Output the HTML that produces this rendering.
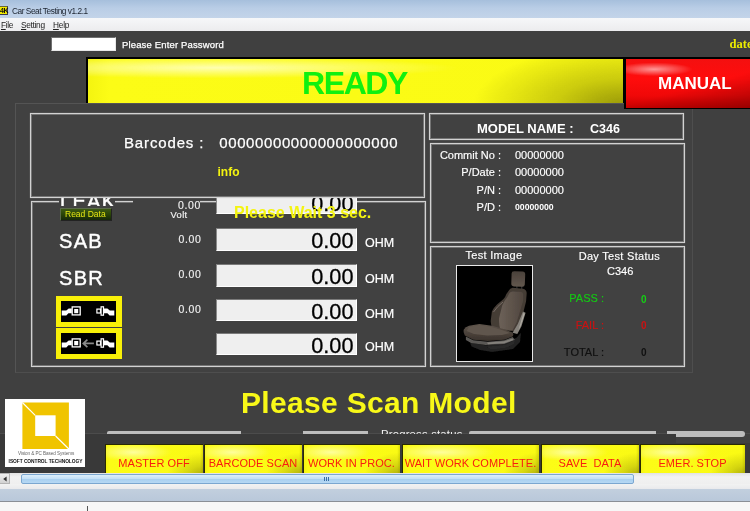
<!DOCTYPE html>
<html>
<head>
<meta charset="utf-8">
<title>Car Seat Testing</title>
<style>
*{box-sizing:border-box;margin:0;padding:0}
html,body{width:750px;height:511px;overflow:hidden;background:#404040;font-family:"Liberation Sans",sans-serif;}
#root{will-change:transform;position:relative;width:750px;height:511px;overflow:hidden;background:#404040}
.abs{position:absolute}
.t{position:absolute;white-space:nowrap;line-height:1}
/* title + menu */
#titlebar{left:0;top:0;width:750px;height:18px;background:linear-gradient(#a6bfdc 0%,#b9cde6 45%,#c3d4e9 100%)}
#menubar{left:0;top:18px;width:750px;height:13px;background:linear-gradient(#f6f7f9,#ececee)}
/* banner */
#banner{left:86px;top:57px;width:538px;height:46px;background:#000}
#banner .in{left:1.7px;top:1.7px;right:1.2px;bottom:0;background:
 radial-gradient(ellipse 45% 24% at 24% 20%,rgba(255,255,215,.8),rgba(255,255,120,0) 100%),
 radial-gradient(ellipse 150px 62px at 100% 108%,rgba(90,90,0,.62) 0%,rgba(105,105,0,.32) 45%,rgba(120,120,0,0) 100%),
 linear-gradient(90deg,#f4f410 0%,#fcfc16 4%,#fafa14 100%)}
#manual{left:624px;top:57px;width:130px;height:52.4px;background:#000}
#manual .in{left:2px;top:1.8px;right:0;bottom:1.5px;background:
 radial-gradient(ellipse 30% 14% at 22% 21%,rgba(255,175,175,.85),rgba(255,60,60,0) 100%),
 linear-gradient(165deg,rgba(120,0,0,0) 55%,rgba(110,0,0,.55) 100%),
 linear-gradient(180deg,#f41010 0%,#ff0c0c 40%,#f00808 75%,#c80000 100%)}
/* group boxes */
.gb{position:absolute;border:1px solid #d2d2d2;box-shadow:0 0 1px 0 rgba(200,200,200,.6), inset 0 0 0 1px rgba(190,190,190,.42)}
.inp{position:absolute;background:#efefef;border-top:1px solid #7a7a7a;border-left:1px solid #8a8a8a;border-bottom:1px solid #fff;border-right:1px solid #fff;overflow:hidden}
.inp span{position:absolute;right:2.5px;top:1px;font-size:21.7px;line-height:21px;color:#000;-webkit-text-stroke:.3px #000}
.ohm{font-size:12.5px;color:#fff;-webkit-text-stroke:.2px #fff}
.sv{font-size:10.5px;color:#f2f2f2;letter-spacing:.6px;-webkit-text-stroke:.15px #eee}
.big{font-size:20px;color:#fff;letter-spacing:1.3px;-webkit-text-stroke:.45px #fff}
.lab{font-size:11px;color:#fff;-webkit-text-stroke:.15px currentColor}
.btn{position:absolute;top:444px;height:30px;background:#2a2a00;}
.btn .in{position:absolute;left:1px;top:1px;right:0;bottom:0;background:
 radial-gradient(ellipse 40% 30% at 28% 25%,rgba(255,255,190,.8),rgba(255,255,120,0) 100%),
 radial-gradient(ellipse 36px 24px at 100% 108%,rgba(90,90,0,.5) 0%,rgba(105,105,0,.25) 45%,rgba(120,120,0,0) 100%),
 linear-gradient(90deg,#f4f410 0%,#fcfc16 4%,#fafa14 97%,#dcdc08 100%)}
.btn span{position:absolute;left:0;right:0;top:13.4px;text-align:center;font-size:11px;line-height:12px;color:#f81c10;letter-spacing:.05px;white-space:nowrap}
</style>
</head>
<body>
<div id="root">
  <!-- title bar -->
  <div id="titlebar" class="abs"></div>
  <div class="abs" style="left:0;top:6px;width:7.6px;height:9.4px;background:#f4ec00;border:1px solid #3a3a50;border-left:none;border-top-color:#6a6a30"></div>
  <div class="t" style="left:0;top:7px;font-size:7px;font-weight:bold;color:#111;letter-spacing:-.5px">4K</div>
  <div class="t" style="left:12px;top:7px;font-size:8.3px;color:#1c2430;letter-spacing:-.45px">Car Seat Testing v1.2.1</div>
  <div id="menubar" class="abs"></div>
  <div class="t" style="left:1px;top:20.6px;font-size:8.3px;color:#222;letter-spacing:-.35px"><u>F</u>ile</div>
  <div class="t" style="left:21px;top:20.6px;font-size:8.3px;color:#222;letter-spacing:-.3px"><u>S</u>etting</div>
  <div class="t" style="left:53px;top:20.6px;font-size:8.3px;color:#222;letter-spacing:-.2px"><u>H</u>elp</div>

  <!-- password -->
  <div class="abs" style="left:51px;top:37px;width:65px;height:14px;background:#fff;border:1px solid #707070;border-right-color:#e8e8e8;border-bottom-color:#e8e8e8"></div>
  <div class="t" style="left:122px;top:40px;font-size:9.5px;color:#fff;letter-spacing:.15px;-webkit-text-stroke:.25px #fff">Please Enter Password</div>
  <div class="t" style="left:729.4px;top:37.7px;font-size:12.6px;font-weight:bold;color:#ecec00;font-family:'Liberation Serif',serif">date</div>

  <!-- outer panel -->
  <div class="abs" style="left:15px;top:103px;width:677.5px;height:270.3px;background:#414141;border:1px solid #545454;border-right-color:#4e4e4e;border-bottom-color:#4e4e4e"></div>

  <!-- measurement groupbox (behind barcode box) -->
  <div class="gb" style="left:31px;top:201px;width:395px;height:166px"></div>
  <!-- LEAK caption (top clipped by barcode panel) -->
  <div class="abs" style="left:59px;top:190px;width:56px;height:16px;background:#414141;overflow:hidden"><div class="t big" style="left:1px;top:.6px">LEAK</div></div>
  <!-- small label w/ opaque background covering border -->
  <div class="abs" style="left:133px;top:198px;width:67px;height:22px;background:#414141"></div>
  <div class="t sv" style="left:178px;top:199.5px">0.00</div>
  <div class="t sv" style="left:170.5px;top:210.6px;font-size:9.3px;letter-spacing:.4px;-webkit-text-stroke:.2px #eee">Volt</div>
  <!-- row 1 input -->
  <div class="inp" style="left:216px;top:190.5px;width:141px;height:23px"><span>0.00</span></div>

  <!-- Read data button -->
  <div class="abs" style="left:60px;top:208px;width:52px;height:13px;background:linear-gradient(#3c5a12 0%,#2a4408 50%,#16280a 100%);border:1px solid #5a6a4a;border-bottom-color:#222;border-right-color:#222"></div>
  <div class="t" style="left:65px;top:210px;font-size:8.5px;color:#e6e614">Read Data</div>

  <!-- row labels -->
  <div class="t big" style="left:59px;top:231px">SAB</div>
  <div class="t big" style="left:59px;top:268px">SBR</div>
  <div class="t sv" style="left:178.5px;top:234px">0.00</div>
  <div class="t sv" style="left:178.5px;top:268.5px">0.00</div>
  <div class="t sv" style="left:178.5px;top:303.6px">0.00</div>

  <!-- inputs -->
  <div class="inp" style="left:216px;top:228px;width:141px;height:23px"><span>0.00</span></div>
  <div class="inp" style="left:216px;top:264px;width:141px;height:23px"><span>0.00</span></div>
  <div class="inp" style="left:216px;top:299px;width:141px;height:22px"><span>0.00</span></div>
  <div class="inp" style="left:216px;top:333px;width:141px;height:22px"><span>0.00</span></div>
  <div class="t ohm" style="left:365px;top:237px">OHM</div>
  <div class="t ohm" style="left:365px;top:273px">OHM</div>
  <div class="t ohm" style="left:365px;top:308px">OHM</div>
  <div class="t ohm" style="left:365px;top:341px">OHM</div>

  <!-- seat belt icons -->
  <div class="abs" style="left:56px;top:296px;width:66px;height:31px;background:#f8f008"></div>
  <div class="abs" style="left:61px;top:301px;width:55px;height:21px;background:#000"></div>
  <svg class="abs" style="left:61px;top:301px" width="56" height="21" viewBox="0 0 56 21">
    <path d="M0.7 9.4 L5.3 9.4 L7.7 7.6 L10.8 7.6 L10.8 12.3 L7.4 12.3 L5.3 14.5 L0.7 14.5 Z" fill="#fff"/>
    <rect x="11.2" y="5.9" width="8" height="8" fill="none" stroke="#fff" stroke-width="1.3"/>
    <rect x="13.2" y="8" width="4" height="4.2" fill="#fff"/>
    <rect x="35.9" y="8.1" width="3.6" height="3.9" fill="none" stroke="#fff" stroke-width="1.2"/>
    <rect x="40.1" y="5.8" width="2.4" height="8.4" fill="#000" stroke="#fff" stroke-width="1.2"/>
    <path d="M42.9 7.6 L46.4 7.6 L48.8 9.4 L53.3 9.4 L53.3 14.5 L48.6 14.5 L46.4 12.3 L42.9 12.3 Z" fill="#fff"/>
  </svg>
  <div class="abs" style="left:56px;top:328px;width:66px;height:31.4px;background:#f8f008"></div>
  <div class="abs" style="left:61px;top:333px;width:55px;height:21px;background:#000"></div>
  <svg class="abs" style="left:61px;top:333px" width="56" height="22" viewBox="0 0 56 22">
    <path d="M0.7 9.4 L5.3 9.4 L7.7 7.6 L10.8 7.6 L10.8 12.3 L7.4 12.3 L5.3 14.5 L0.7 14.5 Z" fill="#fff"/>
    <rect x="11.2" y="5.9" width="8" height="8" fill="none" stroke="#fff" stroke-width="1.3"/>
    <rect x="13.2" y="8" width="4" height="4.2" fill="#fff"/>
    <path d="M26.4 6.6 L22.3 10.4 L26.4 14.2 M22.6 10.4 L32.9 10.4" fill="none" stroke="#8a8a8a" stroke-width="1.7" stroke-linejoin="miter"/>
    <rect x="35.9" y="8.1" width="3.6" height="3.9" fill="none" stroke="#fff" stroke-width="1.2"/>
    <rect x="40.1" y="5.8" width="2.4" height="8.4" fill="#000" stroke="#fff" stroke-width="1.2"/>
    <path d="M42.9 7.6 L46.4 7.6 L48.8 9.4 L53.3 9.4 L53.3 14.5 L48.6 14.5 L46.4 12.3 L42.9 12.3 Z" fill="#fff"/>
  </svg>

  <!-- barcode groupbox (opaque; covers top of LEAK row) -->
  <div class="gb" style="left:30px;top:113px;width:395px;height:85px;background:#414141"></div>
  <div class="t" style="left:124px;top:134.5px;font-size:15px;color:#fff;letter-spacing:.85px;-webkit-text-stroke:.25px #fff">Barcodes :</div>
  <div class="t" style="left:219.3px;top:135px;font-size:15px;color:#fff;letter-spacing:.6px;-webkit-text-stroke:.25px #fff">00000000000000000000</div>
  <div class="t" style="left:217.5px;top:166px;font-size:12px;font-weight:bold;color:#f4f410">info</div>

  <!-- please wait overlay -->
  <div class="t" style="left:234px;top:205px;font-size:16px;font-weight:bold;color:#f4f410">Please Wait 3 sec.</div>

  <!-- model name box -->
  <div class="gb" style="left:429px;top:113px;width:255px;height:27px"></div>
  <div class="t" style="left:477px;top:122px;font-size:13px;font-weight:bold;color:#fff">MODEL NAME :</div>
  <div class="t" style="left:590px;top:122.6px;font-size:12.5px;font-weight:bold;color:#fff">C346</div>

  <!-- info box -->
  <div class="gb" style="left:430px;top:143px;width:255px;height:100px"></div>
  <div class="t lab" style="right:249px;top:150px">Commit No :</div>
  <div class="t lab" style="right:249px;top:167px">P/Date :</div>
  <div class="t lab" style="right:249px;top:185px">P/N :</div>
  <div class="t lab" style="right:249px;top:202px">P/D :</div>
  <div class="t lab" style="left:515px;top:150px">00000000</div>
  <div class="t lab" style="left:515px;top:167px">00000000</div>
  <div class="t lab" style="left:515px;top:185px">00000000</div>
  <div class="t" style="left:515px;top:203px;font-size:8.7px;font-weight:bold;color:#fff">00000000</div>

  <!-- test image / status box -->
  <div class="gb" style="left:430px;top:246px;width:255px;height:121px"></div>
  <div class="t lab" style="left:465.5px;top:250px;letter-spacing:.3px">Test Image</div>
  <div class="t lab" style="left:578.7px;top:251px;letter-spacing:.3px">Day Test Status</div>
  <div class="t lab" style="left:607px;top:266px">C346</div>
  <div class="t lab" style="right:146px;top:293px;color:#14c814">PASS :</div>
  <div class="t lab" style="right:146px;top:320px;color:#cc1212">FAIL :</div>
  <div class="t lab" style="right:146px;top:347px;color:#101010">TOTAL :</div>
  <div class="t" style="left:641px;top:295px;font-size:10px;font-weight:bold;color:#14d014">0</div>
  <div class="t" style="left:641px;top:321px;font-size:10px;font-weight:bold;color:#cc1212">0</div>
  <div class="t" style="left:641px;top:348px;font-size:10px;font-weight:bold;color:#101010">0</div>
  <!-- seat picture -->
  <div class="abs" style="left:456px;top:265px;width:77px;height:97px;background:#000;border:1px solid #e8e8e8"></div>
  <svg class="abs" style="left:457px;top:266px" width="75" height="95" viewBox="0 0 75 95">
    <defs>
      <linearGradient id="sg" x1="0" y1="0" x2="1" y2="0"><stop offset="0" stop-color="#6c6158"/><stop offset="1" stop-color="#51473f"/></linearGradient>
      <linearGradient id="sc" x1="0" y1="0" x2="0" y2="1"><stop offset="0" stop-color="#5e544b"/><stop offset="1" stop-color="#3a322c"/></linearGradient>
      <linearGradient id="sh" x1="0" y1="0" x2="0" y2="1"><stop offset="0" stop-color="#4a413a"/><stop offset="1" stop-color="#62574e"/></linearGradient>
      <filter id="bl" x="-10%" y="-10%" width="120%" height="120%"><feGaussianBlur stdDeviation=".55"/></filter>
    </defs>
    <g filter="url(#bl)">
    <!-- dark plastic base -->
    <path d="M13 76.5 L28.6 79.3 L47.3 77.8 L59.8 71.6 L64 66.5 L63 76 L56 83 L35 86 L23 84 L14.5 80.5 Z" fill="#202020"/>
    <path d="M30 80.5 L48 79 L58 74 L57 78 L48 82 L34 83.5 Z" fill="#2b2b2b"/>
    <!-- headrest posts -->
    <rect x="59.2" y="20" width="1.4" height="6" fill="#2a2a2a"/>
    <rect x="64" y="20" width="1.4" height="6" fill="#2a2a2a"/>
    <!-- headrest -->
    <path d="M54.6 7.5 Q54.6 5 57.5 5.2 L65.5 5.6 Q68.3 5.8 68.2 8.5 L67.8 18.5 Q67.6 21 65 20.8 L56.8 20.4 Q54.2 20.2 54.3 17.6 Z" fill="url(#sh)"/>
    <!-- backrest outer (bolsters) -->
    <path d="M51.5 24.9 Q53 22 55.6 21.8 L66 22.8 Q69.5 23.5 69.7 27 L69.1 35.3 L66 47.7 L62.9 58.1 L59.8 65.4 L41.1 64.3 L34.9 61.2 Q33.4 57 33.8 53.9 L34.9 45.6 Q37 41 40 38.4 L46.3 33.2 Q48.5 31 49.4 28 Z" fill="#453c36"/>
    <!-- backrest insert -->
    <path d="M52.5 27 Q53.5 25.5 55.5 25.4 L64.5 26 Q66.3 26.5 66.2 29 L66 35.3 L59.8 56 L55.6 64.3 L43.2 63.3 Q41.6 57 42.1 51.9 L45.2 39.4 Q47.5 34.5 50.4 31.1 Z" fill="url(#sg)"/>
    <!-- light seam on left bolster -->
    <path d="M36.5 46 Q40 40.5 46 36" stroke="#8a8078" stroke-width=".7" fill="none"/>
    <!-- silver side trim -->
    <path d="M66 45.6 L68.6 46.7 L64.5 60.2 L60.3 68 L55.6 66.8 L60.8 58.1 Z" fill="#86827b"/>
    <path d="M66.4 47 L67.8 47.6 L63.8 59.8 L61.5 64 Z" fill="#aeaaa2"/>
    <!-- silver base strip -->
    <path d="M8.9 70.5 L16.2 74.3 L30.7 75.7 L47.3 74.3 L55.6 71 L58 73.7 L47.3 78 L28.6 79 L14.1 77 L8.9 73.9 Z" fill="#5a5855"/>
    <path d="M30 76.5 L47 75.3 L55.5 72.5 L56.5 74 L47.3 77.3 L31 78.2 Z" fill="#84817c"/>
    <!-- cushion -->
    <path d="M6.8 63.6 Q8.5 61 12 59.8 L22.4 58.1 L34.9 59.8 L47.3 63.3 L55.6 66.4 Q57 68.5 55.6 70.5 L47.3 73.7 L30.7 75.1 L16.2 73.7 L7.9 69.5 Q6 66.5 6.8 63.6 Z" fill="url(#sc)"/>
    <path d="M12 61 L22.4 59.3 L34.5 61 L46.5 64.4 L53 67 L45 69 L30 69.5 L17 68 L9.5 65 Z" fill="#61564d"/>
    </g>
  </svg>

  <!-- please scan -->
  <div class="t" style="left:241px;top:388px;font-size:30px;font-weight:bold;color:#f8f818;letter-spacing:.32px">Please Scan Model</div>

  <!-- faint separator line and darker strip -->
  <div class="abs" style="left:0;top:433px;width:750px;height:1px;background:#4c4c4c"></div>
  <div class="abs" style="left:0;top:434px;width:676px;height:40px;background:#393939"></div>
  <div class="abs" style="left:676px;top:443px;width:74px;height:31px;background:#393939"></div>

  <!-- progress lines -->
  <div class="abs" style="left:107px;top:431px;width:134px;height:3px;background:#bdbdbd;border-radius:2px 0 0 0"></div>
  <div class="abs" style="left:303px;top:431px;width:65px;height:3px;background:#bdbdbd"></div>
  <div class="abs" style="left:469px;top:431px;width:187px;height:3px;background:#bdbdbd;border-radius:2px 0 0 0"></div>
  <div class="abs" style="left:667px;top:431px;width:14px;height:3px;background:#bdbdbd"></div>
  <div class="abs" style="left:676px;top:431px;width:69px;height:6.4px;background:#bdbdbd;border-radius:0 3.5px 3.5px 0"></div>
  <div class="abs" style="left:380px;top:426px;width:84px;height:7.6px;overflow:hidden"><div class="t" style="left:1px;top:2.9px;font-size:11.3px;color:#f0f0f0;letter-spacing:.2px">Progress status</div></div>

  <!-- logo -->
  <div class="abs" style="left:5px;top:399px;width:80px;height:68px;background:#fff"></div>
  <svg class="abs" style="left:5px;top:399px" width="80" height="68" viewBox="0 0 80 68">
    <rect x="17.4" y="3.5" width="46.5" height="46.5" fill="#f0c400"/>
    <rect x="30.2" y="16.3" width="20.4" height="20.7" fill="#fff"/>
    <path d="M17.4 3.5 L30.2 16.3 M50.6 37 L63.9 50" stroke="#fff" stroke-width="1.2"/>
  </svg>
  <div class="t" style="left:18px;top:452px;font-size:4.6px;color:#666;letter-spacing:-.05px">Vision &amp; PC Based Systems</div>
  <div class="t" style="left:8.6px;top:459.6px;font-size:4.85px;font-weight:bold;color:#111;letter-spacing:-.05px">ISOFT CONTROL TECHNOLOGY</div>

  <!-- buttons -->
  <div class="btn" style="left:105px;width:98px"><div class="in"></div><span>MASTER OFF</span></div>
  <div class="btn" style="left:204px;width:98px"><div class="in"></div><span>BARCODE SCAN</span></div>
  <div class="btn" style="left:303px;width:97px"><div class="in"></div><span>WORK IN PROC.</span></div>
  <div class="btn" style="left:402px;width:137px"><div class="in"></div><span>WAIT WORK COMPLETE.</span></div>
  <div class="btn" style="left:541px;width:98px"><div class="in"></div><span>SAVE&nbsp; DATA</span></div>
  <div class="btn" style="left:640px;width:105px"><div class="in"></div><span>EMER. STOP</span></div>

  <!-- scrollbar -->
  <div class="abs" style="left:0;top:473px;width:750px;height:11px;background:linear-gradient(#e2e2e2,#f2f2f2 35%,#efefef)"></div>
  <div class="abs" style="left:0;top:473px;width:10px;height:11px;background:linear-gradient(#eeeeee,#d2d2d2);border:1px solid #b4b4b4;border-left:none"></div>
  <svg class="abs" style="left:2px;top:476px" width="6" height="6" viewBox="0 0 6 6"><path d="M4.6 .6 L1.2 3 L4.6 5.4 Z" fill="#303030"/></svg>
  <div class="abs" style="left:21px;top:474px;width:613px;height:10px;background:linear-gradient(#dceefb 0%,#c4e0f6 45%,#a9d0f0 55%,#b6d8f4 100%);border:1px solid #7ba7d0;border-radius:2px"></div>
  <div class="abs" style="left:324px;top:477px;width:1px;height:4px;background:#3a6ea5;box-shadow:2px 0 0 #3a6ea5,4px 0 0 #3a6ea5"></div>
  <!-- bottom bands -->
  <div class="abs" style="left:0;top:484px;width:750px;height:5px;background:linear-gradient(#f2f2f2,#e9eaec)"></div>
  <div class="abs" style="left:0;top:489px;width:750px;height:12px;background:linear-gradient(#c2cfde,#b9c8da)"></div>
  <div class="abs" style="left:0;top:501px;width:750px;height:10px;background:#f7f7f7;border-top:1px solid #8a8f96"></div>
  <div class="abs" style="left:87px;top:506px;width:1px;height:5px;background:#555"></div>

  <!-- banner -->
  <div id="banner" class="abs"><div class="in abs"></div></div>
  <div class="t" style="left:302px;top:67px;font-size:32px;font-weight:bold;color:#10f010;letter-spacing:-1.4px">READY</div>
  <div id="manual" class="abs"><div class="in abs"></div></div>
  <div class="t" style="left:658px;top:75px;font-size:17px;font-weight:bold;color:#fff">MANUAL</div>
</div>
</body>
</html>
